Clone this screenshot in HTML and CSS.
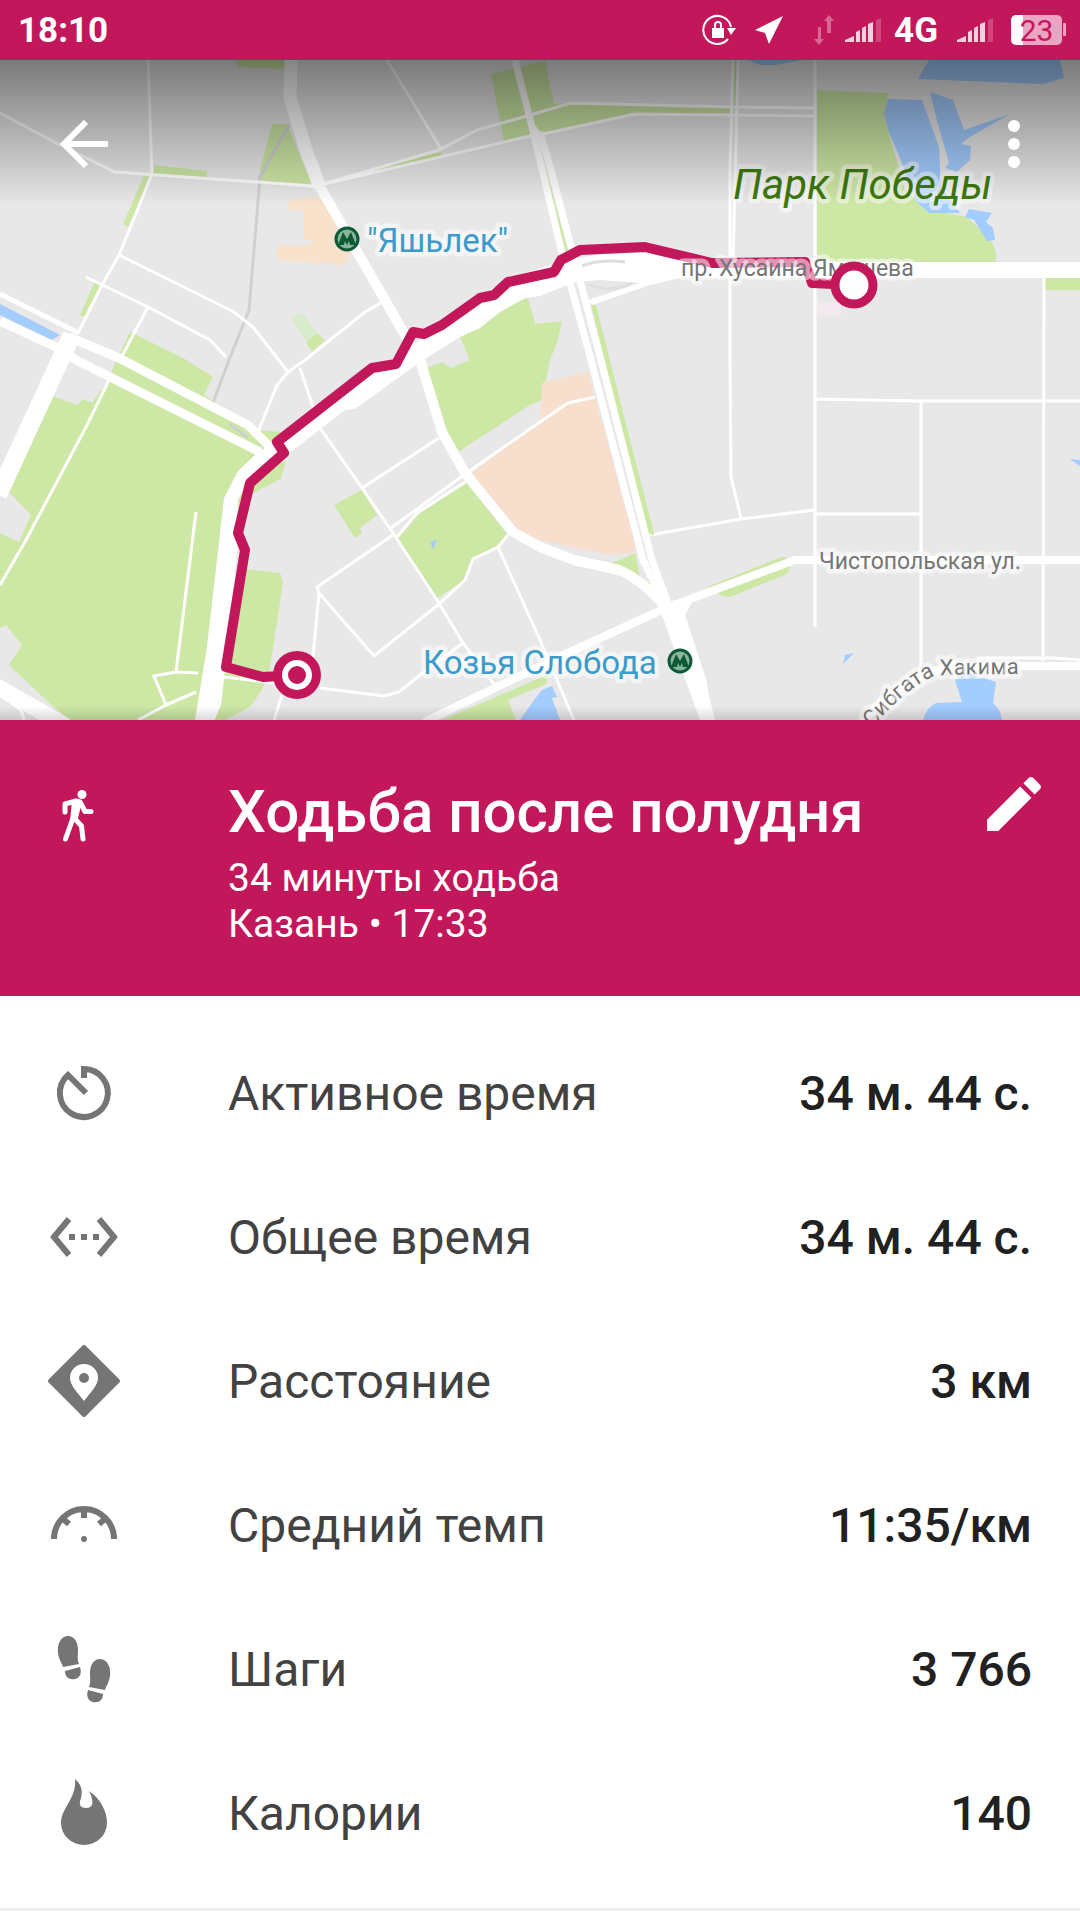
FILE: index.html
```html
<!DOCTYPE html>
<html lang="ru">
<head>
<meta charset="utf-8">
<meta name="viewport" content="width=device-width, initial-scale=1">
<title>Ходьба после полудня</title>
<link rel="stylesheet" href="styles.css">
</head>
<body>
<div class="status">
  <span class="clock">18:10</span>
  <div class="status-icons">
    <svg class="i-lock" width="34" height="34" viewBox="0 0 34 34" aria-hidden="true">
      <path d="M26 26A14 14 0 1 1 29 14" fill="none" stroke="#fff" stroke-width="2"/>
      <path d="M10 15h12v10H10z" fill="#fff"/><path d="M13 15v-3a3 3 0 0 1 6 0v3" fill="none" stroke="#fff" stroke-width="2"/>
      <path d="M25 15h9l-5 7z" fill="#fff"/>
    </svg>
    <svg class="i-loc" width="28" height="28" viewBox="0 0 28 28" aria-hidden="true"><path d="M0 14L28 0 14 28 10 17z" fill="#fff"/></svg>
    <svg class="i-data" width="20" height="30" viewBox="0 0 20 30" aria-hidden="true"><path d="M4 12h3v12h3l-5 6-5-6h4zM13 18V6h-3l5-6 5 6h-3v12z" fill="#fff" opacity=".35"/></svg>
    <svg class="i-signal" width="36" height="24" viewBox="0 0 36 24" aria-hidden="true"><path d="M0 24v-2l9-4v6zM11 24v-10l4-2v12zM17 24V10l4-2v16zM23 24V6l5-2v20z" fill="#fff" opacity=".8"/><path d="M31 24V2l5-2v24z" fill="#fff" opacity=".2"/></svg>
    <span class="net">4G</span>
    <svg class="i-signal" width="36" height="24" viewBox="0 0 36 24" aria-hidden="true"><path d="M0 24v-2l9-4v6zM11 24v-10l4-2v12zM17 24V10l4-2v16zM23 24V6l5-2v20z" fill="#fff" opacity=".8"/><path d="M31 24V2l5-2v24z" fill="#fff" opacity=".2"/></svg>
    <span class="battery">23</span>
  </div>
</div>

<div class="map">
  <svg class="map-art" viewBox="0 60 1080 660" role="img" aria-label="Маршрут на карте">
    <rect y="60" width="1080" height="660" fill="#e8e8e8"/>
    <g fill="#cde7a5">
      <path d="M236 60H286V69L238 67zM272 124H287L312 185 262 182 260 170zM154 165L207 171V180L153 174zM144 176L152 177 128 227 123 224zM94 283L101 285 84 317 80 315zM358 172L441 152V157L358 177z"/>
      <path d="M491 74L545 61 554 104 571 103 731 107V113L635 114 532 137 504 142zM306 342L317 333 325 340 312 352z"/>
      <path d="M130 332L183 358 213 377 204 395 255 430 280 432 287 457 281 479 240 500 224 600 196 720H69L46 700 9 665 22 645 6 625 0 628V533L19 542 31 515 5 488 53 396 77 405 83 399 92 403 110 378 114 365z"/>
      <path d="M246 569L280 573 283 582 270 668 262 690 250 707 225 720H212L228 640zM334 505L362 490 377 515 360 528 362 533 355 538zM467 483L508 535 498 547 473 559 465 580 437 598 398 538 420 513z"/>
      <path d="M517 302L528 298 535 324 562 321 557 343 550 360 542 400 530 405 458 452 444 427 427 368 442 362 451 368 470 360 460 337z"/>
      <path d="M817 90L888 93 885 120 905 190 930 210 967 217 991 240 996 252V262H817zM1045 278H1080V290H1045zM612 563L635 553 640 577zM643 552L660 594 650 587zM707 587L781 557 788 558 790 568 787 574 730 597 723 596zM442 720L549 674 546 684 508 700 516 720z"/>
      <path d="M733 60h5v50h-5zM591 305L596 305 654 535 646 535zM538 140L568 250 563 252z"/>
    </g>
    <path d="M291 317L303 313 317 333 306 342z" fill="#d8ebcd"/>
    <path d="M472 473L540 420 542 383 588 372 636 547 633 553 609 555 540 540 517 533z" fill="#f8decd"/>
    <path d="M289 200L313 197 332 198 351 253 344 265 277 260V246L312 245V240H304V210H289z" fill="#f8e2cc"/>
    <path d="M817 303H841V316H817z" fill="#f4e9ef"/>
    <g fill="#a3ccff">
      <path d="M888 99L922 100 939 147 941 187 960 213H929L915 200 902 163 888 130 884 113zM930 92L953 100 964 130 1010 114 970 137 961 144 971 146 970 160 957 172 945 168 949 163 936 117zM929 60H1060L1064 78 1043 84 918 79zM748 60H802L775 65 760 65z"/>
      <path d="M969 209L992 213 986 222 993 228 995 240 987 241 974 220 965 217zM430 542L437 540 433 549zM0 304L60 335 52 340 0 315zM1070 459L1080 460V466zM843 664L845 655 854 653zM955 680L967 673 996 682 993 703Q1000 708 1002 720H923Q926 708 936 703L962 702zM520 720L534 700 542 690 552 686 557 697 552 698 560 720z"/>
    </g>
    <path d="M289 125L260 177 249 310 229 360 213 403M230 424L248 438" fill="none" stroke="#d0d0d0" stroke-width="3"/>
    <g fill="none" stroke="#fff" stroke-width="3">
      <path d="M148 60L152 174 119 255 101 287 78 333M0 113L60 145 115 172 313 186M387 60L441 149M320 185L439 150 477 130 527 116 571 103 731 107 815 108M320 185L530 136 543 134 635 114 815 116"/>
      <path d="M119 255L234 312 253 327 288 372 277 385 258 432M288 372L305 360 365 312 381 303M86 277L148 307 210 340 226 357M148 307L121 358M300 368L320 428 362 488 393 533 437 600 463 643 496 687M362 488L439 438M391 528L461 477 540 422 568 403 595 397M396 538L417 513 465 482"/>
      <path d="M393 535L317 587 319 593 313 657M319 593L374 656 438 605 465 580 473 559 498 547 508 535M498 547L540 640 574 720M320 688L384 696 399 692 420 675 463 643M282 695L274 720M224 677L275 683M196 512L176 672M198 673L176 672 154 676 166 705 138 720M166 705L196 692M110 378L86 427 26 540 0 585M0 694L21 710 24 720M236 547L220 703 213 720"/>
      <path d="M733 60L730 170V360L731 477 741 518M738 60L733 260M815 60V627M815 399L919 401H1080M921 401V670M815 514H921M1044 278L1043 661M977 658H1053L1080 660M650 535L741 519 815 510"/>
    </g>
    <g fill="none" stroke="#fff" stroke-linejoin="round">
      <path d="M0 294L79 333" stroke-width="5"/>
      <path d="M291 60L290 97 306 150 320 187" stroke-width="13"/>
      <path d="M320 187L408 340 420 360 442 432 465 473 513 532 540 547 574 560 619 570Q643 580 666 608" stroke-width="10"/>
      <path d="M0 321L58 348 76 360 260 452M69 337L119 358 213 407 248 425 275 452" stroke-width="9"/>
      <path d="M72 335L57 367 5 480-2 495" stroke-width="18"/>
      <path d="M-4 686L66 726" stroke-width="16"/>
      <path d="M515 60L532 127 541 138" stroke-width="7"/>
      <path d="M532 127L562 253 591 360 643 560 666 608M540 132L551 170 571 247 601 360 652 560 670 608" stroke-width="7"/>
      <path d="M1080 560H795L709 592 666 608 568 653 424 722M1080 666H960Q905 670 860 725" stroke-width="8"/>
    </g>
    <path d="M597 322L607 360 653 535" fill="none" stroke="#cde7a5" stroke-width="3"/>
    <g fill="#fff">
      <path d="M280 440L350 390 420 340 480 295 520 275 560 262 600 254 645 252 700 262H1080V278H680L650 285 592 305 588 300 640 283 600 280 575 282 540 296 525 298 500 312 480 328 460 337 420 362 355 409 345 410 287 455z"/>
      <path d="M258 452L238 471 224 498 207 647 195 720H214L221 690 237 545 238 500 252 475 287 460 280 440z"/>
      <path d="M660 610L674 600 692 602 685 615 707 682 708 692 715 720H700z"/>
    </g>
    <path d="M582 266Q600 259 625 262M588 284Q610 294 632 283" fill="none" stroke="#dedede" stroke-width="3"/>

    <path d="M297 675L263 677 226 667 245 550 238 533 250 483 284 453 277 442 372 368 396 364 413 332 424 334 442 325 480 298 494 295 508 282 554 272 561 260 580 250 645 247 712 263 805 262 812 283 854 285" fill="none" stroke="#c2185b" stroke-width="10" stroke-linejoin="round"/>

    <g class="label street">
      <text x="681" y="276">пр. Хусаина Ямашева</text>
      <text x="819" y="569">Чистопольская ул.</text>
      <path id="hakima" d="M872 728Q906 688 934 676Q938 674 1040 674" fill="none" stroke="none"/>
      <text class="curved"><textPath href="#hakima">Сибгата Хакима</textPath></text>
    </g>
    <g class="label metro">
      <text x="367" y="252">"Яшьлек"</text>
      <text x="423" y="674">Козья Слобода</text>
    </g>
    <g class="label park"><text x="733" y="199">Парк Победы</text></g>
    <g id="m1">
      <circle cx="347" cy="239" r="11" fill="#8ab59c" stroke="#0b5a35" stroke-width="3"/>
      <path d="M338 245L343 232 347 239 351 232 356 245H350L349 241 347 245 345 241 344 245z" fill="#0b5a35"/>
    </g>
    <use href="#m1" x="333" y="422"/>

    <circle cx="854" cy="285" r="19" fill="#fff" stroke="#c2185b" stroke-width="9"/>
    <circle cx="297" cy="675" r="24" fill="#c2185b"/>
    <circle cx="297" cy="675" r="12" fill="#c2185b" stroke="#fff" stroke-width="6"/>
  </svg>
  <div class="appbar">
    <button class="icon-btn" aria-label="Назад"><svg width="48" height="48" viewBox="0 0 48 48"><path d="M48 24H5M26 2L4 24 26 46" fill="none" stroke="#fff" stroke-width="6"/></svg></button>
    <button class="icon-btn" aria-label="Ещё"><svg width="12" height="48" viewBox="0 0 12 48"><g fill="#fff"><circle cx="6" cy="6" r="6"/><circle cx="6" cy="24" r="6"/><circle cx="6" cy="42" r="6"/></g></svg></button>
  </div>
</div>

<header class="summary">
  <svg class="walk" width="56" height="56" viewBox="0 0 56 56" aria-hidden="true">
    <circle cx="34" cy="6.500" r="4.500" fill="#fff"/>
    <path d="M17 24V16L28 13 32 14 37 23.500H43M25 30L17.500 51M26 30L33.500 38 35 51" fill="none" stroke="#fff" stroke-width="5" stroke-linecap="round" stroke-linejoin="round"/>
    <path d="M24 13H33L32 22 29 34 22 33z" fill="#fff"/>
  </svg>
  <div class="summary-text">
    <h1>Ходьба после полудня</h1>
    <p>34 минуты ходьба</p>
    <p>Казань • 17:33</p>
  </div>
  <button class="edit" aria-label="Изменить"><svg width="72" height="72" viewBox="0 0 24 24"><path fill="#fff" d="M3 17.250V21h3.750L17.810 9.940l-3.750-3.750L3 17.250zM20.710 7.040c.39-.39.39-1.020 0-1.410l-2.340-2.340c-.39-.39-1.020-.39-1.410 0l-1.830 1.830 3.750 3.750 1.830-1.830z"/></svg></button>
</header>

<main>
  <dl class="stats">
    <div class="row"><dt><svg width="72" height="72" viewBox="0 0 72 72" aria-hidden="true"><path d="M38 36L20 18A24 24 0 1 0 36 12V21" fill="none" stroke="#757575" stroke-width="6"/></svg>Активное время</dt><dd>34 м. 44 с.</dd></div>
    <div class="row"><dt><svg width="72" height="72" viewBox="0 0 72 72" aria-hidden="true"><path d="M21 18L6 36 21 54M51 18L66 36 51 54" fill="none" stroke="#757575" stroke-width="6"/><path d="M21 33h6v6h-6zM33 33h6v6h-6zM45 33h6v6h-6z" fill="#757575"/></svg>Общее время</dt><dd>34 м. 44 с.</dd></div>
    <div class="row"><dt><svg width="72" height="72" viewBox="0 0 72 72" aria-hidden="true"><path d="M36 2L70 36 36 70 2 36z" fill="#757575" stroke="#757575" stroke-width="4" stroke-linejoin="round"/><path d="M36 56C27 45 22 39 22 33a14 14 0 0 1 28 0C50 39 45 45 36 56z" fill="#fff"/><circle cx="36" cy="33" r="5" fill="#757575"/></svg>Расстояние</dt><dd>3 км</dd></div>
    <div class="row"><dt><svg width="72" height="72" viewBox="0 0 72 72" aria-hidden="true"><path d="M6 50A30 30 0 0 1 66 50M36 19V29M14 29L21 35M58 29L51 35" fill="none" stroke="#757575" stroke-width="6"/><circle cx="36" cy="50" r="3" fill="#757575"/></svg>Средний темп</dt><dd>11:35/км</dd></div>
    <div class="row"><dt><svg width="72" height="72" viewBox="0 0 72 72" aria-hidden="true"><g id="foot" fill="#757575"><path d="M19 3C12 4 9 12 10 20 11 27 14 30 15 34L31 31C29 26 30 23 30 17 30 9 26 2 19 3z"/><path d="M17 38L32 34C34 40 32 45 27 46 21 47 17 44 17 38z"/></g><use href="#foot" transform="translate(72 23) scale(-1 1)"/></svg>Шаги</dt><dd>3 766</dd></div>
    <div class="row"><dt><svg width="72" height="72" viewBox="0 0 72 72" aria-hidden="true"><path d="M27 2C33 7 35 13 33 21 30 28 33 31 38 31 46 31 46 24 41 14 53 22 59 35 59 46A23 22 0 0 1 13 46C13 31 29 21 27 2z" fill="#757575"/></svg>Калории</dt><dd>140</dd></div>
  </dl>
</main>
</body>
</html>
```
FILE: styles.css
```css
* { box-sizing: border-box; }
body { margin: 0; background: #fff; font-family: Roboto, sans-serif; color: #424242; }
svg { display: block; flex: none; }
button { padding: 0; border: 0; background: none; cursor: pointer; }

.status { display: flex; align-items: center; justify-content: space-between; height: 60px; padding: 0 13px 0 18px; background: #c2185b; color: #fff; font-size: 35px; font-weight: 700; line-height: 60px; }
.status-icons { display: flex; align-items: center; }
.clock, .net { padding-top: 2px; }
.i-loc { margin-left: 19px; }
.i-data { margin: 0 11px 0 31px; }
.net { margin: 0 19px 0 13px; }
.battery { position: relative; width: 51px; height: 30px; margin: 0 5px 0 18px; border-radius: 5px; background: linear-gradient(90deg, #fff 12px, #eba4c1 12px); color: #c2185b; font-size: 30px; font-weight: 400; line-height: 31px; text-align: center; }
.battery::after { content: ""; position: absolute; top: 8px; right: -4px; width: 3px; height: 13px; border-radius: 1px; background: #eba4c1; }

.map { position: relative; }
.map-art { width: 100%; height: auto; }
.map::after { content: ""; position: absolute; inset: 0; background: linear-gradient(rgba(0, 0, 0, .48), transparent 146px), linear-gradient(0deg, rgba(0, 0, 0, .14), transparent 14px); pointer-events: none; }
.appbar { position: absolute; z-index: 1; top: 0; left: 0; right: 0; display: flex; justify-content: space-between; padding: 60px 60px 0; }
.label { paint-order: stroke; stroke: rgba(255, 255, 255, .55); stroke-width: 9px; stroke-linejoin: round; }
.street { font-size: 23px; fill: #757575; }
.curved { font-size: 22px; }
.metro { font-size: 33px; fill: #3b9bcb; }
.park { font-size: 42px; font-style: italic; fill: #3d7a0c; }

.summary { display: flex; align-items: flex-start; padding: 48px 30px 49px 48px; background: #c2185b; color: #fff; }
.walk { margin-top: 20px; }
.summary-text { flex: 1; margin-left: 124px; padding-top: 4px; }
h1 { margin: 0 0 3px; font-size: 60px; font-weight: 500; line-height: 80px; }
p { margin: 0; font-size: 39px; line-height: 46px; }

.stats { margin: 0; padding: 25px 0 23px; border-bottom: 3px solid #eee; }
.row { display: flex; align-items: center; justify-content: space-between; height: 144px; padding: 0 48px; font-size: 48px; }
dt { display: flex; align-items: center; gap: 108px; }
dd { margin: 0; color: #212121; font-weight: 500; }
```
